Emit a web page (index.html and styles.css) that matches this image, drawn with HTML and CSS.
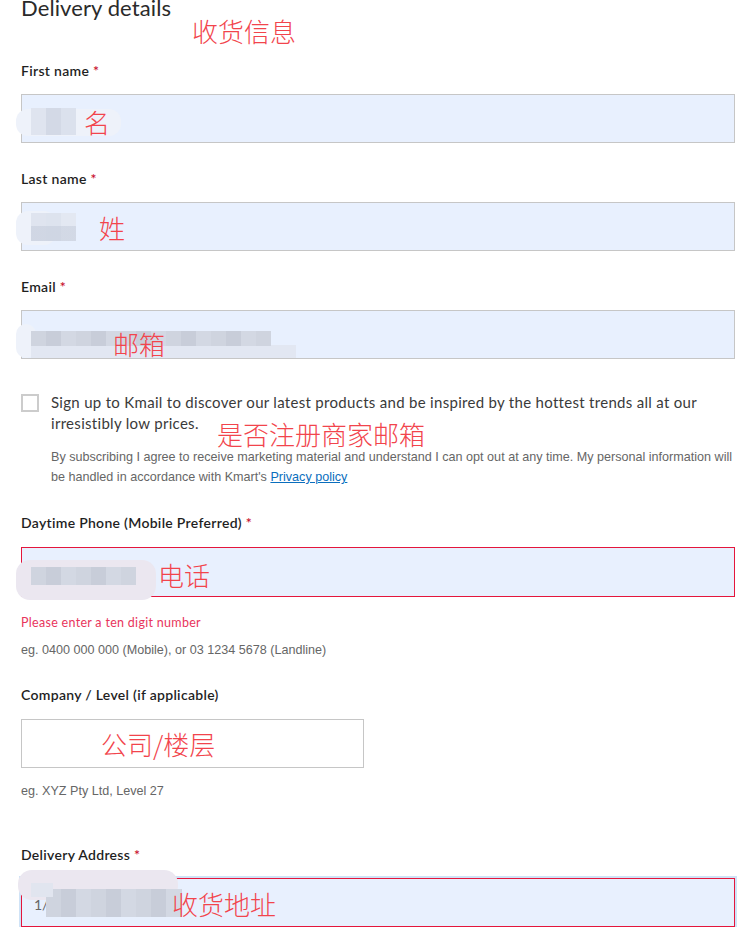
FILE: index.html
```html
<!DOCTYPE html>
<html lang="en">
<head>
<meta charset="utf-8">
<title>Delivery details</title>
<link rel="stylesheet" href="styles.css">
</head>
<body>
<main class="form">
  <h2 class="heading">Delivery details</h2>
  <span class="note note-title">收货信息</span>

  <div class="field field-first">
    <label class="label">First name <span class="req">*</span></label>
    <div class="input filled">
      <span class="mask mask-halo" style="left:-6px;top:14px;width:105px;height:27px"></span>
      <span class="mask mask-tiles" style="left:9px;top:13px;width:45px;height:27px"></span>
      <span class="note" style="left:62px;top:14px">名</span>
    </div>
  </div>

  <div class="field">
    <label class="label">Last name <span class="req">*</span></label>
    <div class="input filled">
      <span class="mask mask-halo" style="left:-6px;top:8px;width:40px;height:34px"></span>
      <span class="mask mask-tiles2" style="left:9px;top:10px;width:45px;height:28px"></span>
      <span class="note" style="left:77px;top:12px">姓</span>
    </div>
  </div>

  <div class="field">
    <label class="label">Email <span class="req">*</span></label>
    <div class="input filled">
      <span class="mask mask-halo" style="left:-6px;top:13px;width:20px;height:34px"></span>
      <span class="mask mask-strip" style="left:9px;top:34px;width:265px;height:13px"></span>
      <span class="mask mask-line" style="left:9px;top:20px;width:240px;height:15px"></span>
      <span class="note" style="left:91px;top:20px">邮箱</span>
    </div>
  </div>

  <div class="optin">
    <span class="checkbox"></span>
    <div class="optin-text">
      <p class="optin-main">Sign up to Kmail to discover our latest products and be inspired by the hottest trends all at our irresistibly low prices.</p>
      <p class="optin-small">By subscribing I agree to receive marketing material and understand I can opt out at any time. My personal information will be handled in accordance with Kmart's <a href="#" class="link">Privacy policy</a></p>
    </div>
    <span class="note note-optin">是否注册商家邮箱</span>
  </div>

  <div class="field field-phone">
    <label class="label">Daytime Phone (Mobile Preferred) <span class="req">*</span></label>
    <div class="input filled error input-phone">
      <span class="mask mask-pink" style="left:-6px;top:12px;width:140px;height:40px"></span>
      <span class="mask mask-line" style="left:9px;top:19px;width:105px;height:18px"></span>
      <span class="note" style="left:136px;top:14px">电话</span>
    </div>
    <p class="error-text">Please enter a ten digit number</p>
    <p class="hint hint-phone">eg. 0400 000 000 (Mobile), or 03 1234 5678 (Landline)</p>
  </div>

  <div class="field field-company">
    <label class="label">Company / Level (if applicable)</label>
    <div class="input input-half">
      <span class="note" style="left:79px;top:11px">公司/楼层</span>
    </div>
    <p class="hint hint-company">eg. XYZ Pty Ltd, Level 27</p>
  </div>

  <div class="field field-address">
    <label class="label">Delivery Address <span class="req">*</span></label>
    <div class="input filled error focus">
      <span class="addr-start">1/c</span>
      <span class="mask mask-pink" style="left:-4px;top:-9px;width:160px;height:30px"></span>
      <span class="mask mask-line" style="left:24px;top:10px;width:136px;height:28px"></span>
      <span class="mask mask-halo2" style="left:9px;top:4px;width:22px;height:14px"></span>
      <span class="note" style="left:150px;top:12px">收货地址</span>
    </div>
  </div>
</main>
</body>
</html>
```

FILE: styles.css
```css
* { box-sizing: border-box; }

html, body {
  margin: 0;
  padding: 0;
  background: #ffffff;
}

body {
  font-family: Lato, "Noto Sans", "Liberation Sans", sans-serif;
  color: #1f1f1f;
  overflow: hidden;
}

.form {
  position: relative;
  padding: 0 15px 0 21px;
}

.heading {
  margin: -4px 0 0;
  font-size: 22px;
  line-height: 24px;
  font-weight: 400;
  color: #2a2a2a;
  letter-spacing: 0.1px;
}

.note {
  position: absolute;
  font-family: "Noto Sans CJK SC", sans-serif;
  font-weight: 300;
  font-size: 26px;
  line-height: 26px;
  color: #f2444c;
  white-space: nowrap;
  z-index: 3;
}

.note-title {
  left: 192px;
  top: 22px;
}

.field {
  margin-top: 26px;
}

.field-first {
  margin-top: 41px;
}

.label {
  display: block;
  height: 20px;
  font-size: 14px;
  line-height: 20px;
  font-weight: 600;
  letter-spacing: 0.3px;
  color: #1f1f1f;
}

.req {
  color: #c8102e;
}

.input {
  position: relative;
  margin-top: 13px;
  height: 49px;
  border: 1px solid #c6c6c6;
  background: #ffffff;
}

.input.filled {
  background: #e8f0fe;
}

.input.error {
  border-color: #e4163c;
}

.input-phone {
  margin-top: 14px;
  height: 50px;
}

.input.focus {
  box-shadow: 0 0 0 2px #cfe3f7;
}

.input-half {
  width: 343px;
  margin-top: 14px;
}

.mask {
  position: absolute;
  z-index: 2;
}

.mask-halo {
  background: #eef2fa;
  border-radius: 12px;
}

.mask-halo2 {
  background: #e1e5ef;
}

.mask-pink {
  background: #ebe7f0;
  border-radius: 14px;
}

.mask-tiles {
  background:
    linear-gradient(to right, #dfe4ef 0 15px, #d3d9e6 15px 30px, #dbe1ed 30px 45px);
}

.mask-tiles2 {
  background:
    linear-gradient(to bottom, transparent 0 13px, rgba(190, 198, 214, 0.45) 13px 28px),
    linear-gradient(to right, #dfe4ef 0 15px, #dde3ee 15px 30px, #e3e8f2 30px 45px);
}

.mask-line {
  background:
    repeating-linear-gradient(to right, #cfd4df 0 15px, #c8cdd9 15px 30px, #d3d8e3 30px 45px);
}

.mask-strip {
  background: #e2e7f2;
}

.addr-start {
  position: absolute;
  left: 12px;
  top: 17px;
  font-size: 14px;
  color: #666;
}

.optin {
  position: relative;
  display: flex;
  gap: 12px;
  margin-top: 33px;
}

.checkbox {
  flex: none;
  width: 18px;
  height: 18px;
  margin-top: 2px;
  border: 2px solid #cccccc;
  background: #ffffff;
}

.optin-text p {
  margin: 0;
}

.optin-main {
  font-size: 15px;
  line-height: 21px;
  letter-spacing: 0.3px;
  color: #3a3a3a;
}

.optin-small {
  margin-top: 13px !important;
  font-family: "Liberation Sans", Arial, sans-serif;
  font-size: 12.6px;
  line-height: 20px;
  color: #666666;
}

.link {
  color: #0a6ebd;
  text-decoration: underline;
}

.note-optin {
  left: 196px;
  top: 29px;
}

.error-text {
  margin: 18px 0 0;
  font-size: 12.5px;
  line-height: 16px;
  letter-spacing: 0.3px;
  color: #e8355c;
}

.hint {
  margin: 0;
  font-family: "Liberation Sans", Arial, sans-serif;
  font-size: 12.6px;
  line-height: 16px;
  color: #666666;
}

.hint-phone {
  margin-top: 11px;
}

.field-company {
  margin-top: 27px;
}

.hint-company {
  margin-top: 15px;
}

.field-address {
  margin-top: 46px;
}
```
